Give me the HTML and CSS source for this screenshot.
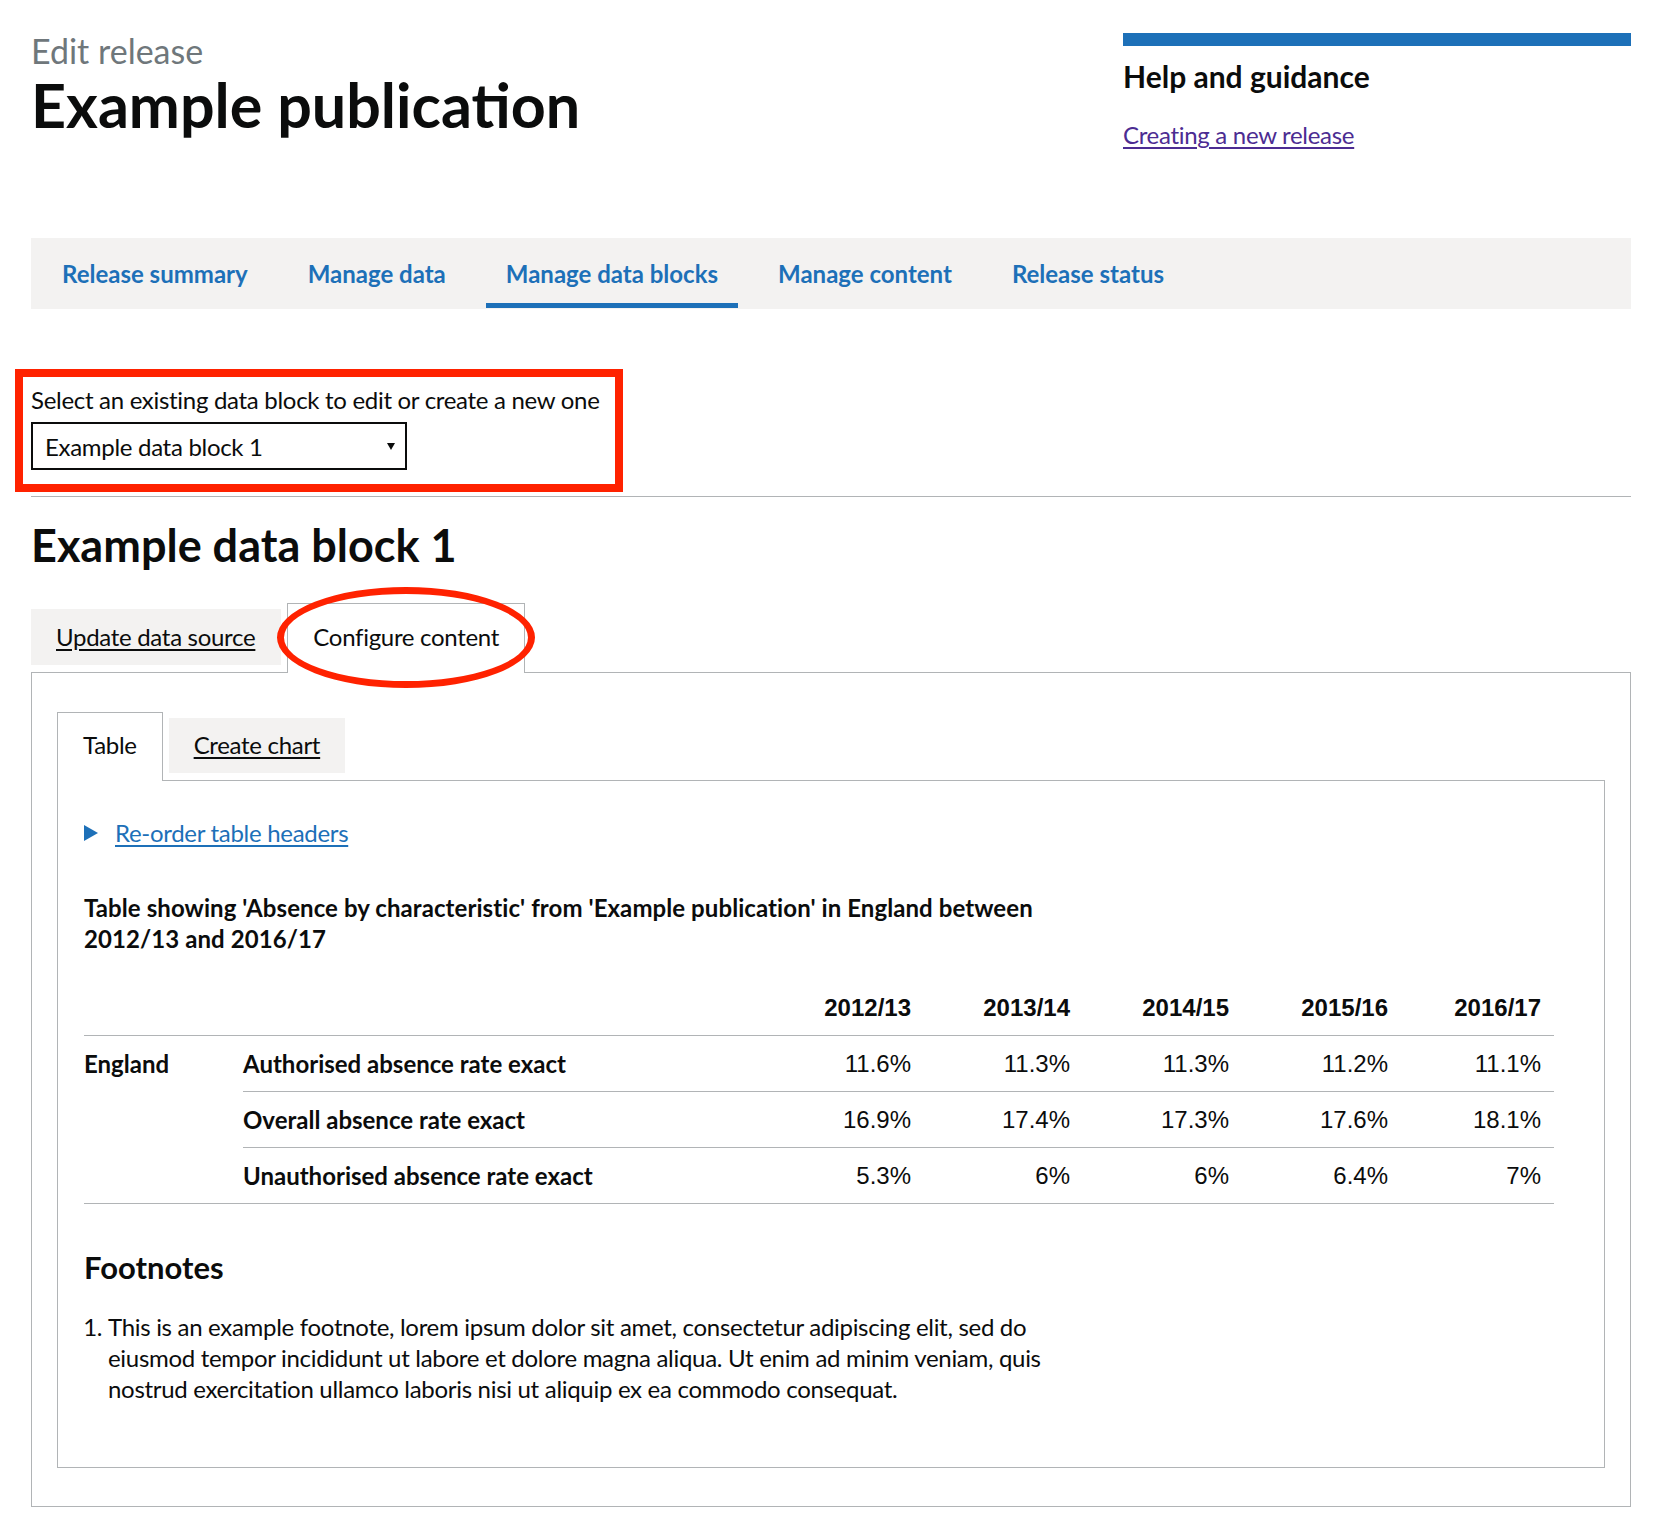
FILE: index.html
```html
<!DOCTYPE html>
<html lang="en">
<head>
<meta charset="utf-8">
<title>Edit release - Example publication</title>
<link rel="stylesheet" href="styles.css">
</head>
<body>
<div class="page">
  <header class="top">
    <div class="title-col">
      <span class="caption">Edit release</span>
      <h1 class="h1">Example publication</h1>
    </div>
    <aside class="help">
      <h2 class="help-title">Help and guidance</h2>
      <a class="help-link" href="#">Creating a new release</a>
    </aside>
  </header>

  <nav class="nav">
    <a class="nav-link" href="#">Release summary</a>
    <a class="nav-link" href="#">Manage data</a>
    <a class="nav-link nav-link--active" href="#">Manage data blocks</a>
    <a class="nav-link" href="#">Manage content</a>
    <a class="nav-link" href="#">Release status</a>
  </nav>

  <div class="picker">
    <label class="picker-label">Select an existing data block to edit or create a new one</label>
    <div class="select"><span>Example data block 1</span><span class="select-arrow"></span></div>
    <span class="annot-box"></span>
  </div>

  <hr class="rule">

  <h2 class="h2">Example data block 1</h2>

  <ul class="tab-list">
    <li class="tab tab--plain"><a href="#">Update data source</a></li>
    <li class="tab tab--selected">Configure content<span class="annot-ellipse"></span></li>
  </ul>
  <div class="panel">
    <ul class="tab-list tab-list--inner">
      <li class="tab tab--selected tab--inner-sel">Table</li>
      <li class="tab tab--plain tab--inner-plain"><a href="#">Create chart</a></li>
    </ul>
    <div class="subpanel">
      <div class="details"><span class="details-arrow"></span><a class="details-link" href="#">Re-order table headers</a></div>

      <p class="table-caption">Table showing 'Absence by characteristic' from 'Example publication' in England between 2012/13 and 2016/17</p>

      <table class="data-table">
        <colgroup>
          <col class="col-region">
          <col class="col-label">
          <col class="col-year">
          <col class="col-year">
          <col class="col-year">
          <col class="col-year">
          <col class="col-year col-year--last">
        </colgroup>
        <thead>
          <tr>
            <td class="cell cell--blank"></td>
            <td class="cell cell--blank"></td>
            <th class="cell cell--num cell--head">2012/13</th>
            <th class="cell cell--num cell--head">2013/14</th>
            <th class="cell cell--num cell--head">2014/15</th>
            <th class="cell cell--num cell--head">2015/16</th>
            <th class="cell cell--num cell--head cell--last">2016/17</th>
          </tr>
        </thead>
        <tbody>
          <tr>
            <th class="cell cell--rowhead" rowspan="3">England</th>
            <th class="cell cell--rowhead">Authorised absence rate exact</th>
            <td class="cell cell--num">11.6%</td>
            <td class="cell cell--num">11.3%</td>
            <td class="cell cell--num">11.3%</td>
            <td class="cell cell--num">11.2%</td>
            <td class="cell cell--num cell--last">11.1%</td>
          </tr>
          <tr>
            <th class="cell cell--rowhead">Overall absence rate exact</th>
            <td class="cell cell--num">16.9%</td>
            <td class="cell cell--num">17.4%</td>
            <td class="cell cell--num">17.3%</td>
            <td class="cell cell--num">17.6%</td>
            <td class="cell cell--num cell--last">18.1%</td>
          </tr>
          <tr>
            <th class="cell cell--rowhead">Unauthorised absence rate exact</th>
            <td class="cell cell--num">5.3%</td>
            <td class="cell cell--num">6%</td>
            <td class="cell cell--num">6%</td>
            <td class="cell cell--num">6.4%</td>
            <td class="cell cell--num cell--last">7%</td>
          </tr>
        </tbody>
      </table>

      <h3 class="footnotes-title">Footnotes</h3>
      <ol class="footnotes">
        <li>This is an example footnote, lorem ipsum dolor sit amet, consectetur adipiscing elit, sed do eiusmod tempor incididunt ut labore et dolore magna aliqua. Ut enim ad minim veniam, quis nostrud exercitation ullamco laboris nisi ut aliquip ex ea commodo consequat.</li>
      </ol>
    </div>
  </div>
</div>
</body>
</html>
```

FILE: styles.css
```css
* { box-sizing: border-box; }

body {
  margin: 0;
  font-family: Lato, "Liberation Sans", Arial, sans-serif;
  color: #0b0c0c;
  background: #fff;
  letter-spacing: -0.3px;
}

.page {
  padding: 0 34px 33px 31px;
}

/* Header */
.top {
  display: flex;
  justify-content: space-between;
  align-items: flex-start;
}
.title-col { padding-top: 31px; }
.caption {
  display: block;
  font-size: 34px;
  line-height: 40px;
  color: #6f777b;
  letter-spacing: 0;
}
.h1 {
  margin: 1px 0 0;
  font-size: 61px;
  line-height: 66px;
  font-weight: 700;
  letter-spacing: 0;
}
.help {
  width: 508px;
  margin-top: 33px;
  border-top: 13px solid #1d70b8;
}
.help-title {
  margin: 12px 0 0;
  font-size: 30px;
  line-height: 36px;
  font-weight: 700;
  letter-spacing: 0;
}
.help-link {
  display: inline-block;
  margin-top: 25px;
  font-size: 24px;
  line-height: 31px;
  color: #4c2c92;
  text-decoration: underline;
  text-underline-offset: 3px;
}

/* Navigation */
.nav {
  margin-top: 88px;
  background: #f3f2f1;
  display: flex;
  gap: 20px;
  padding: 0 0 1px 11px;
}
.nav-link {
  padding: 20px 20px 14px;
  border-bottom: 5px solid transparent;
  font-size: 24px;
  line-height: 31px;
  font-weight: 700;
  color: #1d70b8;
  text-decoration: none;
  letter-spacing: 0;
}
.nav-link--active { border-bottom-color: #1d70b8; }

/* Data block picker */
.picker {
  position: relative;
  margin-top: 75px;
}
.picker-label {
  display: block;
  font-size: 24px;
  line-height: 31px;
}
.select {
  margin-top: 7px;
  width: 376px;
  height: 48px;
  border: 2px solid #0b0c0c;
  display: flex;
  align-items: center;
  justify-content: space-between;
  padding: 0 10px 0 12px;
  font-size: 24px;
}
.select-arrow {
  width: 0;
  height: 0;
  border-top: 7px solid #0b0c0c;
  border-left: 4px solid transparent;
  border-right: 4px solid transparent;
}
.annot-box {
  position: absolute;
  left: -16px;
  top: -15px;
  width: 608px;
  height: 123px;
  border: 8px solid #ff2200;
  pointer-events: none;
}

.rule {
  margin: 26px 0 0;
  border: 0;
  border-top: 1px solid #b1b4b6;
}

.h2 {
  margin: 23px 0 0;
  font-size: 45px;
  line-height: 50px;
  font-weight: 700;
  letter-spacing: 0;
}

/* Tabs */
.tab-list {
  margin: 33px 0 0;
  padding: 0;
  list-style: none;
  display: flex;
  align-items: flex-end;
  gap: 6px;
}
.tab-list--inner { margin-top: 0; }
.tab {
  font-size: 24px;
  line-height: 31px;
}
.tab--plain {
  background: #f3f2f1;
  padding: 12px 26px 13px 25px;
  margin-bottom: 7px;
}
.tab--plain a {
  color: #0b0c0c;
  text-decoration: underline;
  text-underline-offset: 3px;
}
.tab--selected {
  position: relative;
  z-index: 1;
  background: #fff;
  border: 1px solid #b1b4b6;
  border-bottom: 0;
  padding: 17px 25px 21px;
  margin-bottom: -1px;
}
.tab--inner-sel { padding: 16px 25px 21px; }
.tab--inner-plain { padding: 11px 25px 13px; }

.annot-ellipse {
  position: absolute;
  left: -11px;
  top: -17px;
  width: 258px;
  height: 101px;
  border: 7px solid #ff2200;
  border-radius: 50%;
  pointer-events: none;
}

.panel {
  border: 1px solid #b1b4b6;
  padding: 39px 25px 38px;
}
.subpanel {
  border: 1px solid #b1b4b6;
  padding: 36px 26px 63px;
}

.details {
  display: flex;
  align-items: center;
  gap: 17px;
  font-size: 24px;
  line-height: 31px;
}
.details-arrow {
  width: 0;
  height: 0;
  border-left: 14px solid #1d70b8;
  border-top: 8px solid transparent;
  border-bottom: 8px solid transparent;
}
.details-link {
  color: #1d70b8;
  text-decoration: underline;
  text-underline-offset: 3px;
}

.table-caption {
  margin: 44px 0 0;
  max-width: 960px;
  font-size: 24px;
  line-height: 31px;
  font-weight: 700;
  letter-spacing: 0.08px;
}

/* Table */
.data-table {
  margin-top: 26px;
  width: calc(100% - 24px);
  border-collapse: collapse;
  table-layout: fixed;
  font-size: 24px;
  line-height: 31px;
}
.col-region { width: 159px; }
.col-year { width: 159px; }
.col-year--last { width: 166px; }
.cell {
  padding: 12px 13px 12px 0;
  border-bottom: 1px solid #b1b4b6;
  text-align: left;
  vertical-align: top;
  font-weight: 400;
  letter-spacing: 0;
}
.cell--rowhead { font-weight: 700; }
.cell--num {
  padding-right: 0;
  text-align: right;
  font-family: "Liberation Sans", Arial, sans-serif;
}
.cell--last { padding-right: 13px; }
.cell--head { font-weight: 700; }

.footnotes-title {
  margin: 45px 0 0;
  font-size: 31px;
  line-height: 36px;
  font-weight: 700;
  letter-spacing: 0;
}
.footnotes {
  margin: 26px 0 0;
  padding-left: 24px;
  max-width: 960px;
  font-size: 24px;
  line-height: 31px;
}
```
